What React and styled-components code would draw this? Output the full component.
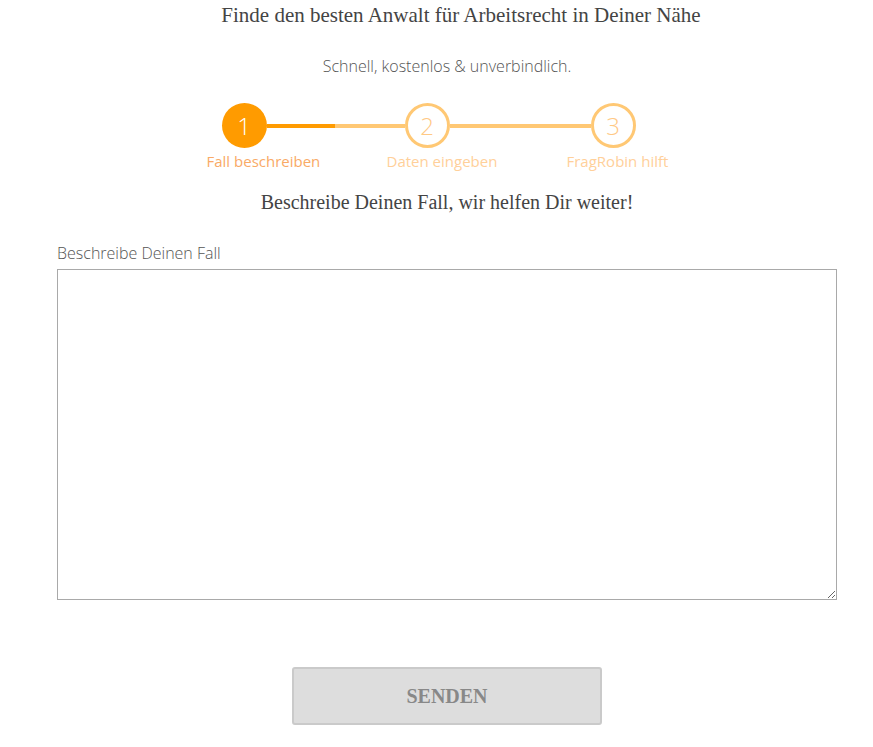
import React, { useState } from "react";
import styled, { createGlobalStyle } from "styled-components";

const GlobalStyle = createGlobalStyle`
  html, body {
    margin: 0;
    padding: 0;
    background: #fff;
  }
  body {
    font-family: "Open Sans", "Liberation Sans", sans-serif;
  }
`;

const steps = [
  { n: 1, label: "Fall beschreiben" },
  { n: 2, label: "Daten eingeben" },
  { n: 3, label: "FragRobin hilft" },
];

const App = () => {
  const [text, setText] = useState("");
  const active = 1;
  return (
    <>
      <GlobalStyle />
      <Page>
        <Title>Finde den besten Anwalt für Arbeitsrecht in Deiner Nähe</Title>
        <Subtitle>Schnell, kostenlos &amp; unverbindlich.</Subtitle>
        <Stepper>
          <CircleRow>
            {steps.map((s, i) => (
              <React.Fragment key={s.n}>
                <Circle active={s.n === active}>{s.n}</Circle>
                {i < steps.length - 1 && (
                  <Connector width={i === 0 ? 138 : 141}>
                    {i === 0 && <ConnectorFill />}
                  </Connector>
                )}
              </React.Fragment>
            ))}
          </CircleRow>
          <LabelRow>
            {steps.map((s) => (
              <StepLabel key={s.n} active={s.n === active}>
                {s.label}
              </StepLabel>
            ))}
          </LabelRow>
        </Stepper>
        <Heading>Beschreibe Deinen Fall, wir helfen Dir weiter!</Heading>
        <Form onSubmit={(e) => e.preventDefault()}>
          <FieldLabel htmlFor="fall">Beschreibe Deinen Fall</FieldLabel>
          <TextArea
            id="fall"
            value={text}
            onChange={(e) => setText(e.target.value)}
          />
          <ButtonRow>
            <SubmitButton type="submit">SENDEN</SubmitButton>
          </ButtonRow>
        </Form>
      </Page>
    </>
  );
};

const Page = styled.div`
  width: 873px;
  box-sizing: border-box;
  padding: 0 36px 0 57px;
  display: flex;
  flex-direction: column;
  align-items: center;
`;

const Title = styled.h1`
  margin: 2px 0 0 28px;
  font-family: "Liberation Serif", "DejaVu Serif", serif;
  font-weight: 400;
  font-size: 21px;
  line-height: 26px;
  color: #444;
`;

const Subtitle = styled.p`
  margin: 28px 0 0 0;
  font-family: "Open Sans", sans-serif;
  font-weight: 300;
  font-size: 16px;
  line-height: 20px;
  color: #555;
`;

const Stepper = styled.div`
  margin-top: 27px;
  margin-left: -11px;
  width: 470px;
  display: flex;
  flex-direction: column;
`;

const CircleRow = styled.div`
  display: flex;
  align-items: center;
  padding-left: 15px;
`;

const Circle = styled.div`
  width: 45px;
  height: 45px;
  box-sizing: border-box;
  border-radius: 50%;
  flex: none;
  display: flex;
  align-items: center;
  justify-content: center;
  font-family: "Open Sans", sans-serif;
  font-weight: 300;
  font-size: 24px;
  color: ${(p) => (p.active ? "#fff" : "#ffc985")};
  background: ${(p) => (p.active ? "#ff9b00" : "#fff")};
  border: ${(p) => (p.active ? "none" : "3px solid #ffc874")};
`;

const Connector = styled.div`
  width: ${(p) => p.width}px;
  height: 4px;
  background: #ffc874;
  flex: none;
`;

const ConnectorFill = styled.div`
  width: 68px;
  height: 100%;
  background: #ff9b00;
`;

const LabelRow = styled.div`
  display: flex;
  margin-top: 3px;
`;

const StepLabel = styled.div`
  font-family: "Open Sans", sans-serif;
  font-weight: 400;
  font-size: 15px;
  line-height: 20px;
  color: ${(p) => (p.active ? "#f9aa66" : "#ffd09a")};
  &:nth-child(1) {
    width: 117px;
  }
  &:nth-child(2) {
    margin-left: 63px;
    width: 114px;
  }
  &:nth-child(3) {
    margin-left: 66px;
  }
`;

const Heading = styled.h2`
  margin: 19px 0 0 0;
  font-family: "Liberation Serif", "DejaVu Serif", serif;
  font-weight: 400;
  font-size: 20px;
  line-height: 24px;
  color: #444;
`;

const Form = styled.form`
  width: 100%;
  margin-top: 28px;
  display: flex;
  flex-direction: column;
`;

const FieldLabel = styled.label`
  font-family: "Open Sans", sans-serif;
  font-weight: 300;
  font-size: 16px;
  line-height: 22px;
  color: #555;
  margin-bottom: 5px;
`;

const TextArea = styled.textarea`
  width: 100%;
  height: 331px;
  box-sizing: border-box;
  border: 1px solid #a9a9a9;
  border-radius: 0;
  padding: 8px;
  font-family: "Open Sans", sans-serif;
  font-size: 14px;
  resize: vertical;
  outline: none;
`;

const ButtonRow = styled.div`
  display: flex;
  justify-content: center;
  margin-top: 67px;
`;

const SubmitButton = styled.button`
  width: 310px;
  height: 58px;
  box-sizing: border-box;
  background: #dddddd;
  border: 2px solid #cacaca;
  border-radius: 3px;
  font-family: "Liberation Serif", "DejaVu Serif", serif;
  font-weight: 700;
  font-size: 20px;
  color: #888;
  cursor: pointer;
`;

export default App;
